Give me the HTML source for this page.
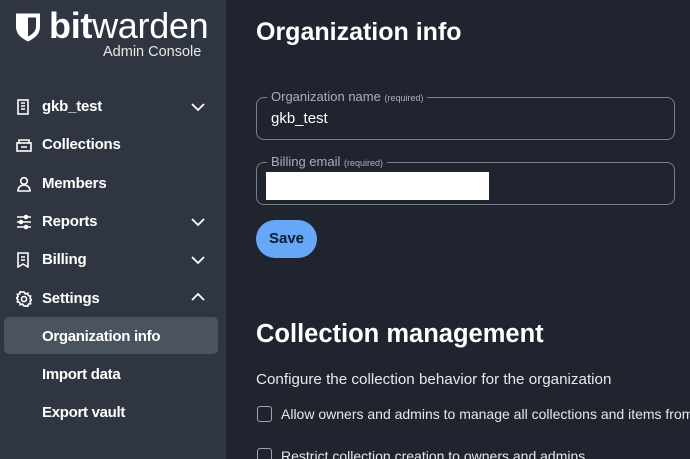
<!DOCTYPE html>
<html><head><style>
*{margin:0;padding:0;box-sizing:border-box}
html,body{width:690px;height:459px;overflow:hidden}
body{background:#1f242e;font-family:"Liberation Sans",sans-serif;color:#fff;position:relative}
.side{position:absolute;left:0;top:0;width:226px;height:459px;background:#2f3642}
.item{position:absolute;left:16px;font-weight:bold;font-size:15px;color:#fff;letter-spacing:-0.2px}
.item svg{position:absolute;left:0;top:1px}
.item span{position:absolute;left:26px;top:0;white-space:nowrap}
.chev{position:absolute;left:191px;width:14px;height:10px}
.sub{position:absolute;left:42px;font-weight:bold;font-size:15px;letter-spacing:-0.3px}
.field{position:absolute;left:256px;width:419px;border:1px solid #7a808a;border-radius:8px}
.lbl{position:absolute;left:10px;top:-9px;background:#1f242e;padding:0 4px;font-size:13px;color:#aab0bb}
.lbl small{font-size:9px}
</style></head><body>
<div class="side">
  <svg style="position:absolute;left:15px;top:12px" width="26" height="31" viewBox="0 0 26 30"><path d="M1 1h24v13c0 8-6 12-12 15C7 26 1 22 1 14z" fill="#fff"/><path d="M13 5h8v9c0 5-4 8-8 10z" fill="#2f3642"/></svg>
  <div style="position:absolute;left:49px;top:7px;font-size:36px;line-height:38px;letter-spacing:-0.3px"><b>bit</b>warden</div>
  <div style="position:absolute;left:103px;top:44px;font-size:14.5px;color:#e8e8e8">Admin Console</div>

  <div class="item" style="top:98px"><svg width="14" height="16" viewBox="0 0 14 16" fill="none" stroke="#fff" stroke-width="1.6"><rect x="2" y="1" width="10" height="14"/><path d="M5 4h4M5 7h4M5 10h4"/></svg><span>gkb_test</span></div>
  <div class="item" style="top:136px"><svg width="16" height="16" viewBox="0 0 16 16" fill="none" stroke="#fff" stroke-width="1.6"><rect x="1" y="6" width="14" height="8"/><path d="M3 6V3h10v3M5 10h6"/></svg><span>Collections</span></div>
  <div class="item" style="top:175px"><svg width="16" height="16" viewBox="0 0 16 16" fill="none" stroke="#fff" stroke-width="1.6"><circle cx="8" cy="5" r="3.3"/><path d="M2 15c0-4 3-6 6-6s6 2 6 6z"/></svg><span>Members</span></div>
  <div class="item" style="top:213px"><svg width="16" height="16" viewBox="0 0 16 16" fill="none" stroke="#fff" stroke-width="1.6"><path d="M1 3h14M1 8h14M1 13h14"/><circle cx="10" cy="3" r="1.5" fill="#fff"/><circle cx="5" cy="8" r="1.5" fill="#fff"/><circle cx="10" cy="13" r="1.5" fill="#fff"/></svg><span>Reports</span></div>
  <div class="item" style="top:251px"><svg width="14" height="16" viewBox="0 0 14 16" fill="none" stroke="#fff" stroke-width="1.6"><path d="M2 1h10v14l-5-3-5 3z"/><path d="M5 5h4M5 8h4"/></svg><span>Billing</span></div>
  <div class="item" style="top:290px"><svg width="16" height="16" viewBox="0 0 16 16" fill="none" stroke="#fff" stroke-width="1.6"><circle cx="8" cy="8" r="2.5"/><path d="M8 1l1.5 2 2.3-.8.5 2.4 2.4.5-.8 2.3 2 1.5-2 1.5.8 2.3-2.4.5-.5 2.4-2.3-.8L8 15l-1.5-2-2.3.8-.5-2.4-2.4-.5.8-2.3-2-1.5 2-1.5-.8-2.3 2.4-.5.5-2.4 2.3.8z"/></svg><span>Settings</span></div>
  <svg class="chev" style="top:102px" viewBox="0 0 14 10" fill="none" stroke="#fff" stroke-width="1.8"><path d="M1 2l6 6 6-6"/></svg>
  <svg class="chev" style="top:217px" viewBox="0 0 14 10" fill="none" stroke="#fff" stroke-width="1.8"><path d="M1 2l6 6 6-6"/></svg>
  <svg class="chev" style="top:255px" viewBox="0 0 14 10" fill="none" stroke="#fff" stroke-width="1.8"><path d="M1 2l6 6 6-6"/></svg>
  <svg class="chev" style="top:292px" viewBox="0 0 14 10" fill="none" stroke="#fff" stroke-width="1.8"><path d="M1 8l6-6 6 6"/></svg>

  <div style="position:absolute;left:4px;top:317px;width:214px;height:37px;background:#4b535f;border-radius:5px"></div>
  <div class="sub" style="top:328px">Organization info</div>
  <div class="sub" style="top:366px">Import data</div>
  <div class="sub" style="top:404px">Export vault</div>
</div>

<div style="position:absolute;left:256px;top:18px;font-size:25px;font-weight:bold">Organization info</div>
<div class="field" style="top:97px;height:43px"><div class="lbl">Organization name <small>(required)</small></div><div style="position:absolute;left:14px;top:12px;font-size:15px">gkb_test</div></div>
<div class="field" style="top:162px;height:43px"><div class="lbl">Billing email <small>(required)</small></div><div style="position:absolute;left:9px;top:9px;width:223px;height:28px;background:#fff"></div></div>
<div style="position:absolute;left:256px;top:220px;width:61px;height:38px;border-radius:19px;background:#66a8f7;color:#0c1a33;font-weight:bold;font-size:15px;text-align:center;line-height:38px">Save</div>

<div style="position:absolute;left:256px;top:320px;font-size:25.5px;font-weight:bold;white-space:nowrap">Collection management</div>
<div style="position:absolute;left:256px;top:371px;font-size:15.2px;color:#e8e8e8;white-space:nowrap">Configure the collection behavior for the organization</div>
<div style="position:absolute;left:257px;top:406px;width:15px;height:16px;border:1.5px solid #a0a6b0;border-radius:3px"></div>
<div style="position:absolute;left:281px;top:406px;font-size:14px;color:#e8e8e8;white-space:nowrap">Allow owners and admins to manage all collections and items from the</div>
<div style="position:absolute;left:257px;top:448px;width:15px;height:16px;border:1.5px solid #a0a6b0;border-radius:3px"></div>
<div style="position:absolute;left:281px;top:448px;font-size:14px;color:#e8e8e8;white-space:nowrap">Restrict collection creation to owners and admins</div>
</body></html>
